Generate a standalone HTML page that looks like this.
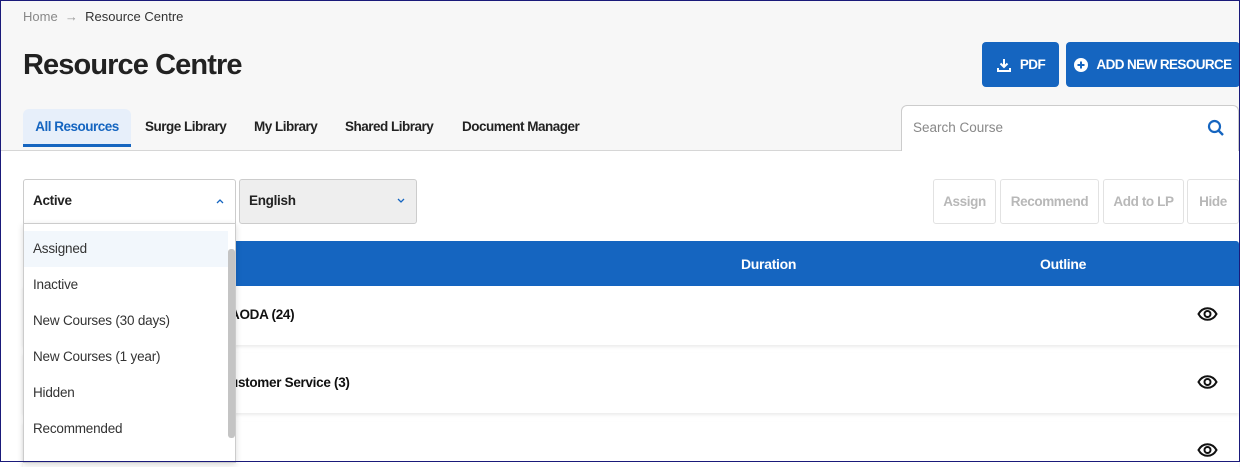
<!DOCTYPE html>
<html><head><style>
*{box-sizing:border-box;margin:0;padding:0}
body{width:1240px;height:462px;overflow:hidden;font-family:"Liberation Sans",sans-serif;background:#fff;position:relative}
.frame{position:absolute;inset:0;border:1px solid #1a1a7a;pointer-events:none;z-index:50}
.top{position:absolute;left:0;top:0;width:1240px;height:151px;background:#f7f7f7;border-bottom:1px solid #d6d6d6}
.a{position:absolute;white-space:nowrap}
.crumb{top:9px;left:23px;font-size:13px;color:#888}
.title{top:49px;left:23px;font-size:29px;color:#222;letter-spacing:-0.9px;font-weight:600}
.btn{position:absolute;background:#1565c0;color:#fff;border-radius:4px;font-weight:bold;font-size:13.5px;letter-spacing:-0.6px;display:flex;align-items:center;justify-content:center;gap:8px}
.tab{top:109px;height:38px;font-size:13.5px;color:#222;letter-spacing:-0.5px;line-height:36px;font-weight:600}
.sel{position:absolute;top:179px;height:45px;border:1px solid #ccc;font-size:13.5px;font-weight:600;letter-spacing:-0.3px;color:#222;padding:13px 9px;border-radius:3px}
.act{position:absolute;top:179px;height:45px;border:1px solid #e2e2e2;border-radius:3px;color:#b8b8b8;font-size:13.5px;display:flex;align-items:center;justify-content:center;letter-spacing:-0.4px;font-weight:600;background:#fff}
.row{position:absolute;left:23px;width:1216px;background:#fff;box-shadow:0 2px 3px rgba(0,0,0,.08)}
.rt{position:absolute;font-size:13.5px;font-weight:bold;letter-spacing:-0.3px;color:#111}
.menu{position:absolute;left:23px;top:223px;width:213px;height:240px;background:#fff;border:1px solid #ccc;box-shadow:0 2px 6px rgba(0,0,0,.15);z-index:10}
.mi{position:absolute;left:0;width:204px;height:36px;font-size:13.5px;color:#333;padding-left:9px;line-height:36px;letter-spacing:-0.2px}
</style></head><body>
<div class="top"></div>
<div class="a crumb">Home&nbsp;&nbsp;<span style="color:#999">→</span>&nbsp;&nbsp;<span style="color:#333">Resource Centre</span></div>
<div class="a title">Resource Centre</div>
<div class="btn" style="left:982px;top:42px;width:77px;height:45px"><svg width="16" height="16" viewBox="0 0 16 16"><path d="M8 2v8M4.5 6.5L8 10l3.5-3.5M2 11v3h12v-3" stroke="#fff" stroke-width="2" fill="none"/></svg>PDF</div>
<div class="btn" style="left:1066px;top:42px;width:174px;height:45px"><svg width="14" height="14" viewBox="0 0 14 14"><circle cx="7" cy="7" r="7" fill="#fff"/><path d="M7 3.5v7M3.5 7h7" stroke="#1565c0" stroke-width="2"/></svg>ADD NEW RESOURCE</div>
<div class="a tab" style="left:23px;width:108px;background:#e7effa;border-radius:6px 6px 0 0;border-bottom:3px solid #1565c0;color:#1565c0;text-align:center">All Resources</div>
<div class="a tab" style="left:145px">Surge Library</div>
<div class="a tab" style="left:254px">My Library</div>
<div class="a tab" style="left:345px">Shared Library</div>
<div class="a tab" style="left:462px">Document Manager</div>
<div class="a" style="left:901px;top:105px;width:338px;height:46px;background:#fff;border:1px solid #ccc;border-bottom:none;border-radius:6px 6px 0 0;font-size:13.5px;color:#888;padding:14px 11px">Search Course
<svg style="position:absolute;right:13px;top:13px" width="18" height="18" viewBox="0 0 18 18"><circle cx="7.5" cy="7.5" r="5.5" stroke="#1565c0" stroke-width="2.2" fill="none"/><path d="M11.5 11.5L16 16" stroke="#1565c0" stroke-width="2.4"/></svg></div>
<div class="sel" style="left:23px;width:213px;background:#fff;border-radius:3px 3px 0 0">Active<svg style="position:absolute;right:11px;top:18px" width="8" height="6" viewBox="0 0 8 6"><path d="M1 5l3-3 3 3" stroke="#1565c0" stroke-width="1.3" fill="none"/></svg></div>
<div class="sel" style="left:239px;width:178px;background:#eee">English<svg style="position:absolute;right:11px;top:18px" width="8" height="6" viewBox="0 0 8 6"><path d="M1 1l3 3 3-3" stroke="#1565c0" stroke-width="1.3" fill="none"/></svg></div>
<div class="act" style="left:933px;width:63px">Assign</div>
<div class="act" style="left:1000px;width:99px">Recommend</div>
<div class="act" style="left:1103px;width:81px">Add to LP</div>
<div class="act" style="left:1187px;width:52px">Hide</div>
<div class="a" style="left:23px;top:241px;width:1216px;height:45px;background:#1565c0;border-radius:3px 3px 0 0"></div>
<div class="a" style="left:741px;top:256px;color:#fff;font-weight:bold;font-size:14px;letter-spacing:-0.3px">Duration</div>
<div class="a" style="left:1040px;top:256px;color:#fff;font-weight:bold;font-size:14px;letter-spacing:-0.3px">Outline</div>
<div class="row" style="top:286px;height:59px"></div>
<div class="row" style="top:353px;height:60px"></div>
<div class="row" style="top:422px;height:45px"></div>
<div class="rt" style="left:230px;top:307px">AODA (24)</div>
<div class="rt" style="left:230px;top:375px">ustomer Service (3)</div>
<svg class="a" style="left:1197px;top:307px" width="21" height="14" viewBox="0 0 21 14"><path d="M1.5 7C4 2.5 7 1.2 10.5 1.2S17 2.5 19.5 7C17 11.5 14 12.8 10.5 12.8S4 11.5 1.5 7Z" stroke="#111" stroke-width="2" fill="none"/><circle cx="10.5" cy="7" r="3" stroke="#111" stroke-width="2" fill="none"/></svg>
<svg class="a" style="left:1197px;top:375px" width="21" height="14" viewBox="0 0 21 14"><path d="M1.5 7C4 2.5 7 1.2 10.5 1.2S17 2.5 19.5 7C17 11.5 14 12.8 10.5 12.8S4 11.5 1.5 7Z" stroke="#111" stroke-width="2" fill="none"/><circle cx="10.5" cy="7" r="3" stroke="#111" stroke-width="2" fill="none"/></svg>
<svg class="a" style="left:1197px;top:443px" width="21" height="14" viewBox="0 0 21 14"><path d="M1.5 7C4 2.5 7 1.2 10.5 1.2S17 2.5 19.5 7C17 11.5 14 12.8 10.5 12.8S4 11.5 1.5 7Z" stroke="#111" stroke-width="2" fill="none"/><circle cx="10.5" cy="7" r="3" stroke="#111" stroke-width="2" fill="none"/></svg>
<div class="menu">
<div class="mi" style="top:7px;background:#f2f7fc">Assigned</div>
<div class="mi" style="top:43px">Inactive</div>
<div class="mi" style="top:79px">New Courses (30 days)</div>
<div class="mi" style="top:115px">New Courses (1 year)</div>
<div class="mi" style="top:151px">Hidden</div>
<div class="mi" style="top:187px">Recommended</div>
<div style="position:absolute;left:204px;top:25px;width:7px;height:189px;background:#c4c4c4;border-radius:3px"></div>
</div>
<div class="frame"></div>
</body></html>
